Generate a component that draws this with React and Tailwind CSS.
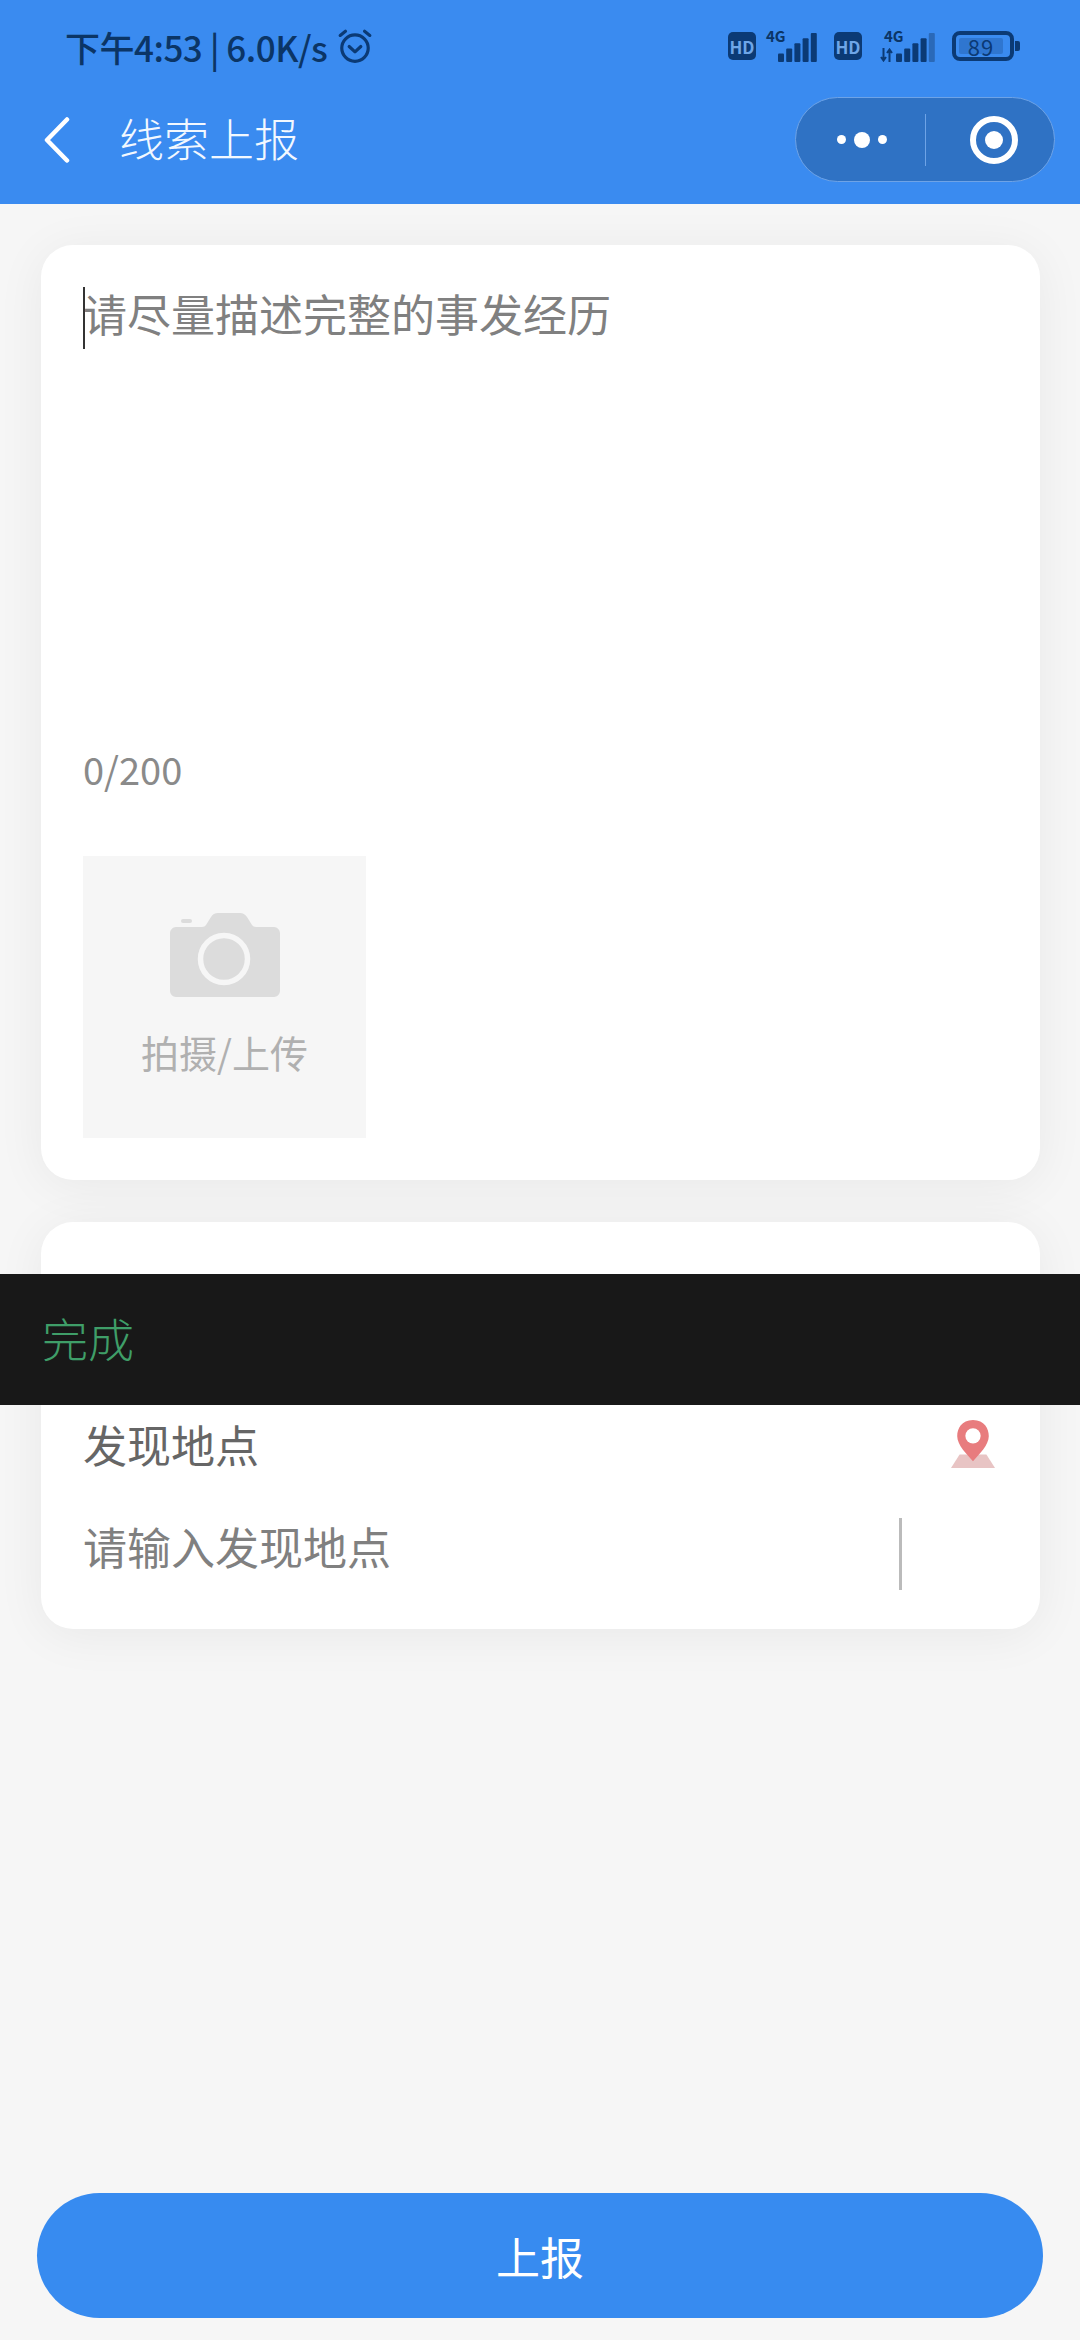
const font = { fontFamily: '"Noto Sans CJK SC", "Noto Sans", sans-serif' }

function Signal({ faded }) {
  const bars = [10, 16, 22, 28, 34]
  return (
    <svg width="40" height="30" viewBox="0 0 40 30" className="block">
      {bars.map((h, i) => (
        <rect key={i} x={i * 8.2} y={30 - h * 0.85} width="6" height={h * 0.85} rx="1" fill={faded && i === 4 ? '#2a69b8' : '#0b3a75'} />
      ))}
    </svg>
  )
}

function Hd() {
  return (
    <div className="w-[28px] h-[28px] rounded-[5px] bg-[#0b3a75] text-[#6ea6e8] flex items-center justify-center text-[17px] font-bold leading-none">
      HD
    </div>
  )
}

function StatusBar() {
  return (
    <div className="h-[92px] flex items-center justify-between pl-[65px] pr-[60px] text-[#0b3566]">
      <div className="flex items-center gap-[10px]">
        <span className="text-[35px] leading-none font-medium tracking-[-0.5px]">下午4:53 | 6.0K/s</span>
        <svg width="36" height="36" viewBox="0 0 34 34" fill="none" stroke="#0b3a75" strokeWidth="3" strokeLinecap="round" strokeLinejoin="round">
          <circle cx="17" cy="19" r="12.500" />
          <path d="M11.500 17.500l5.500 5 5.500-5" />
          <path d="M3 7l5-4M31 7l-5-4" />
        </svg>
      </div>
      <div className="flex items-center">
        <Hd />
        <div className="relative w-[62px] h-[32px] ml-[10px]">
          <span className="absolute left-0 top-[-3px] text-[15px] font-bold leading-[18px]">4G</span>
          <div className="absolute left-[12px] bottom-0"><Signal /></div>
        </div>
        <div className="ml-[6px]"><Hd /></div>
        <div className="relative w-[66px] h-[32px] ml-[18px]">
          <span className="absolute left-[4px] top-[-3px] text-[15px] font-bold leading-[18px]">4G</span>
          <svg width="13" height="14" viewBox="0 0 13 14" fill="none" stroke="#0b3a75" strokeWidth="2" className="absolute left-0 bottom-0">
            <path d="M3.500 0v12M1 9l2.500 3.500L6 9M9.500 14V2M7 5l2.500-3.500L12 5" />
          </svg>
          <div className="absolute left-[16px] bottom-0"><Signal faded /></div>
        </div>
        <div className="ml-[6px] w-[62px] h-[30px] rounded-[8px] border-[4px] border-[#0b3a75] p-[3px] flex">
          <div className="w-[44px] rounded-[2px] bg-[#2f76d0] text-[#0b3a75] text-[22px] leading-none flex items-center justify-center tracking-[1px]">
            89
          </div>
        </div>
        <div className="w-[5px] h-[10px] rounded-r-[2px] bg-[#0b3a75] ml-[1px]" />
      </div>
    </div>
  )
}

function NavBar() {
  return (
    <div className="h-[112px] flex items-start justify-between pl-[44px] pr-[25px]">
      <div className="flex items-center h-[96px]">
        <svg width="26" height="46" viewBox="0 0 26 46" fill="none" stroke="#fff" strokeWidth="4.500" strokeLinecap="round" strokeLinejoin="round">
          <path d="M23 2.500L3 23l20 20.500" />
        </svg>
        <span className="ml-[49px] pb-[6px] text-[45px] leading-none text-[#f2f8ff] font-light">线索上报</span>
      </div>
      <div className="mt-[5px] w-[260px] h-[85px] rounded-full bg-[#2f72c4] border border-[#6ea3e6] flex items-center">
        <div className="w-[129px] flex items-center justify-end gap-[8px] pr-[38px]">
          <span className="w-[9px] h-[9px] rounded-full bg-white" />
          <span className="w-[16px] h-[16px] rounded-full bg-white" />
          <span className="w-[9px] h-[9px] rounded-full bg-white" />
        </div>
        <div className="w-px h-[52px] bg-[#6ea3e6]" />
        <div className="flex-1 flex justify-center pl-[8px]">
          <div className="w-[48px] h-[48px] rounded-full border-[6px] border-white flex items-center justify-center">
            <span className="w-[18px] h-[18px] rounded-full bg-white" />
          </div>
        </div>
      </div>
    </div>
  )
}

function UploadBox() {
  return (
    <div className="w-[283px] h-[282px] bg-[#f6f6f6] flex flex-col items-center pt-[57px]">
      <svg width="110" height="84" viewBox="0 0 110 84" className="block">
        <path
          fill="#dcdcdc"
          d="M6 14h26c2 0 3-1 4-2l5-8c1.500-2.500 4-4 7-4h22c3 0 5 1.500 7 4l5 8c1 1 2 2 4 2h18c3 0 6 3 6 6v58c0 3-3 6-6 6H6c-3 0-6-3-6-6V20c0-3 3-6 6-6z"
        />
        <rect x="11" y="6" width="11" height="4" rx="2" fill="#dcdcdc" />
        <circle cx="54" cy="46" r="23.500" fill="none" stroke="#f6f6f6" strokeWidth="5.500" />
      </svg>
      <span className="mt-[33px] text-[38px] leading-[44px] text-[#b0b0b0]">拍摄/上传</span>
    </div>
  )
}

function MapPin() {
  return (
    <svg width="44" height="50" viewBox="0 0 46 50" className="block">
      <path d="M9 36h28l9 14H0z" fill="#e8c4c4" />
      <path d="M23 0C11 0 6.500 9 6.500 17c0 9 10 19 16.500 26 6.500-7 16.500-17 16.500-26C39.500 9 35 0 23 0z" fill="#e87c7e" />
      <circle cx="23" cy="16.500" r="8" fill="#fff" />
    </svg>
  )
}

export default function App() {
  return (
    <div className="relative w-[1080px] h-[2340px] bg-[#f6f6f6] flex flex-col overflow-hidden" style={font}>
      <div className="bg-[#3a8bf0]">
        <StatusBar />
        <NavBar />
      </div>

      <div className="mt-[41px] ml-[41px] mr-[40px] rounded-[32px] bg-white shadow-[0_6px_50px_rgba(0,0,0,0.06)] p-[42px]">
        <div className="relative h-[460px] text-[44px] leading-[52px] text-[#808080]">
          <span className="absolute left-0 top-0 w-[2px] h-[62px] bg-[#333]" />
          请尽量描述完整的事发经历
        </div>
        <div className="text-[38px] leading-[44px] text-[#8a8a8a]">0/200</div>
        <div className="mt-[65px]">
          <UploadBox />
        </div>
      </div>

      <div className="mt-[42px] ml-[41px] mr-[40px] rounded-[32px] bg-white shadow-[0_6px_50px_rgba(0,0,0,0.06)] pt-[191px] pb-[39px] pl-[42px] pr-[45px]">
        <div className="h-[62px] flex items-center justify-between">
          <span className="text-[44px] leading-none text-[#666]">发现地点</span>
          <MapPin />
        </div>
        <div className="mt-[43px] h-[72px] flex items-center justify-between">
          <span className="text-[44px] leading-none text-[#808080] pb-[16px]">请输入发现地点</span>
          <span className="w-[3px] h-[72px] bg-[#bbb] mr-[93px]" />
        </div>
      </div>

      <div className="absolute left-0 right-0 top-[1274px] h-[131px] bg-[#181818] flex items-center pl-[42px]">
        <span className="text-[46px] leading-none font-light text-[#3f9e68] pb-[6px]">完成</span>
      </div>

      <button className="mt-auto mb-[22px] mx-[37px] h-[125px] rounded-full bg-[#378bf0] text-white text-[44px]">
        上报
      </button>
    </div>
  )
}
